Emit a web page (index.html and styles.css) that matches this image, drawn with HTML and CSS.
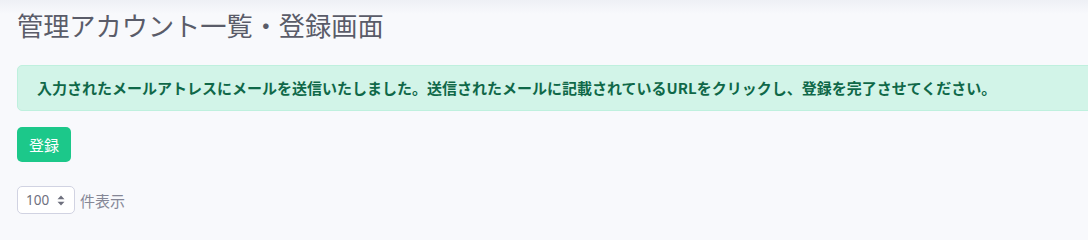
FILE: index.html
```html
<!DOCTYPE html>
<html lang="ja">
<head>
<meta charset="utf-8">
<title>管理アカウント一覧・登録画面</title>
<link rel="stylesheet" href="styles.css">
</head>
<body>
<div class="page">
  <h1 class="title">管理アカウント一覧・登録画面</h1>
  <div class="alert">入力されたメールアトレスにメールを送信いたしました。送信されたメールに記載されているURLをクリックし、登録を完了させてください。</div>
  <button class="btn">登録</button>
  <div class="length">
    <div class="select">
      <span>100</span>
      <svg class="arrows" width="8" height="11" viewBox="0 0 8 11"><path d="M4 0.5 L7.5 4.2 H0.5 Z M4 10.5 L7.5 6.8 H0.5 Z" fill="#6e707e"/></svg>
    </div>
    <span class="length-label">件表示</span>
  </div>
</div>
</body>
</html>
```
FILE: styles.css
```css
html {
  background: #f8f9fc;
}
html, body {
  margin: 0;
  padding: 0;
  overflow: hidden;
}
body {
  background: linear-gradient(#eef0f5 0, #f8f9fc 14px) #f8f9fc;
  font-family: "Noto Sans CJK JP", "Noto Sans", sans-serif;
  color: #858796;
  width: 1088px;
  min-height: 223px;
}
.page {
  padding: 9px 0 0 17px;
  width: 1100px;
}
.title {
  margin: 0;
  font-size: 26.2px;
  font-weight: 400;
  line-height: 32px;
  color: #5a5c69;
}
.alert {
  margin-top: 24px;
  height: 46px;
  box-sizing: border-box;
  border: 1px solid #bff0de;
  border-radius: 5px;
  background: #d2f4e8;
  color: #0f6848;
  font-weight: 700;
  font-size: 15px;
  line-height: 44px;
  padding-left: 19px;
  white-space: nowrap;
}
.btn {
  display: block;
  margin-top: 16px;
  width: 54px;
  height: 35px;
  border: none;
  border-radius: 5px;
  background: #1cc88a;
  color: #fff;
  font-family: "Noto Sans CJK JP", sans-serif;
  font-size: 15px;
  padding: 0;
}
.length {
  margin-top: 24px;
  display: flex;
  align-items: center;
  gap: 5px;
}
.select {
  width: 58px;
  height: 28px;
  box-sizing: border-box;
  border: 1px solid #d1d3e2;
  border-radius: 5px;
  background: #fff;
  display: flex;
  align-items: center;
  padding: 0 9px 0 8px;
  justify-content: space-between;
  font-family: "Noto Sans", sans-serif;
  font-size: 13.5px;
  color: #6e707e;
}
.length-label {
  font-size: 15px;
  color: #858796;
}
```
